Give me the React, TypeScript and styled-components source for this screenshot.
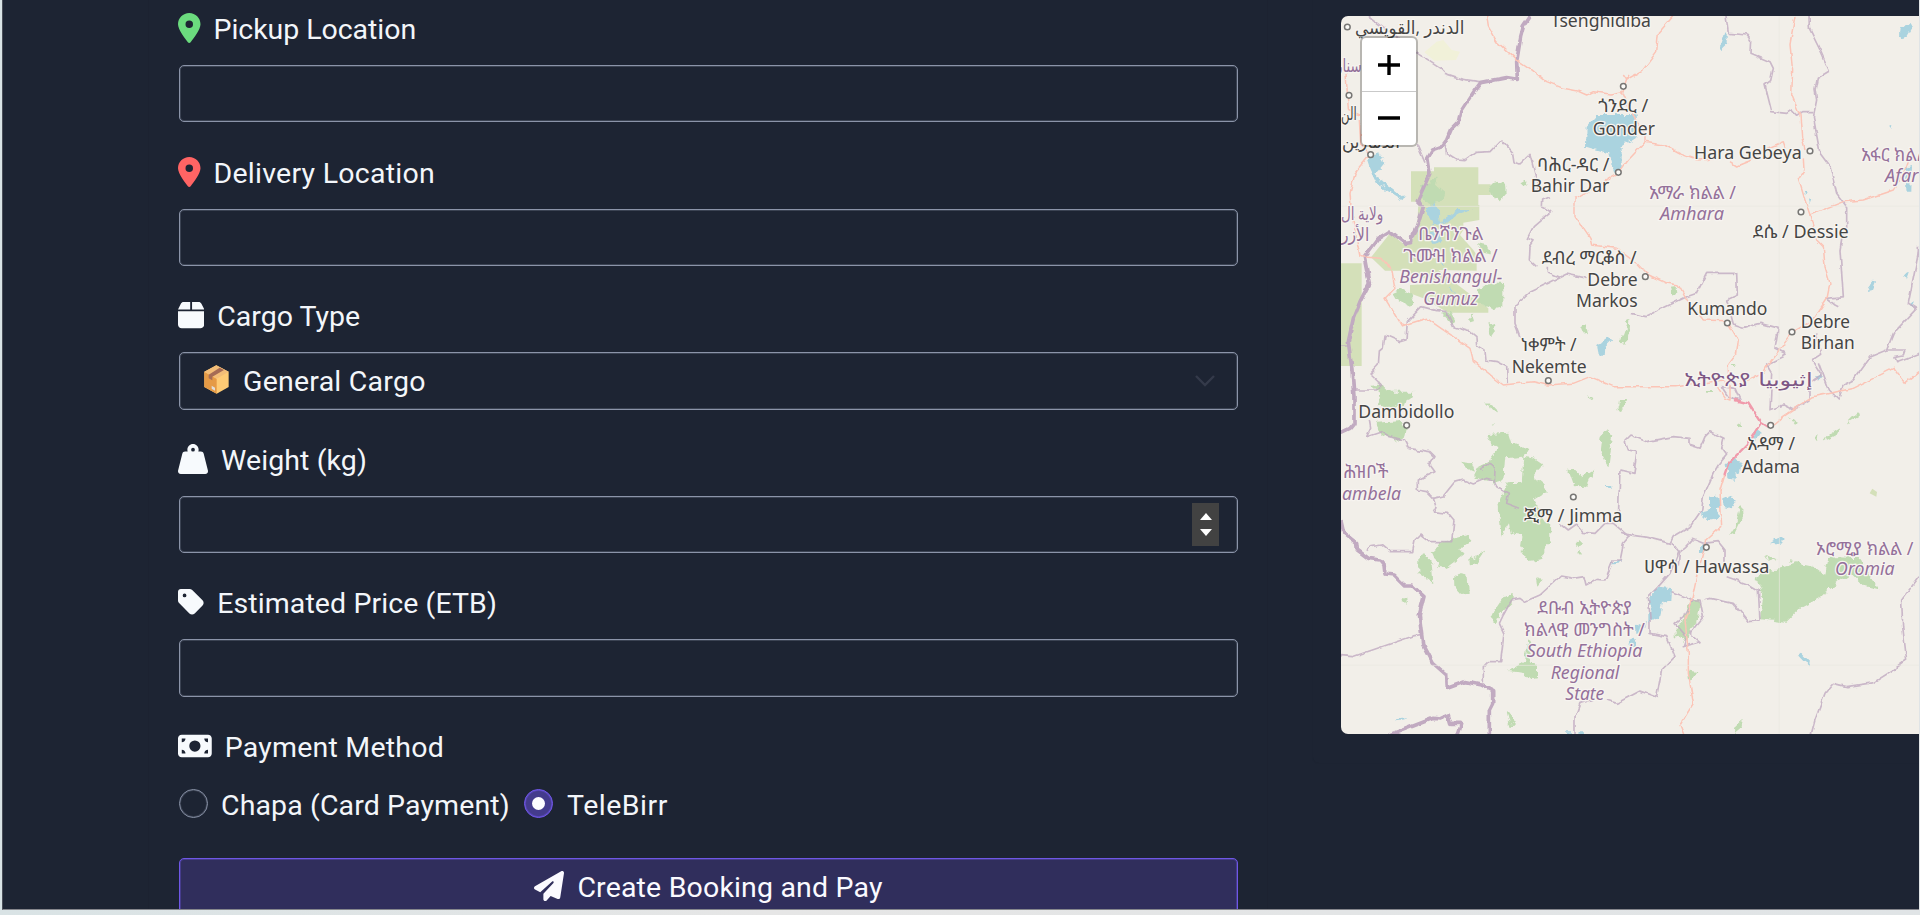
import React from "react";
import styled, { createGlobalStyle } from "styled-components";
import {
  FaBox,
  FaLocationDot,
  FaMoneyBill,
  FaPaperPlane,
  FaTag,
  FaWeightHanging,
} from "react-icons/fa6";

const GlobalStyle = createGlobalStyle`
  * { box-sizing: border-box; }
  html, body { margin: 0; padding: 0; overflow: hidden; background: #e3e6e6; }
`;

const Window = styled.div`
  width: 1920px;
  height: 915px;
  overflow: hidden;
  padding: 0 1px 5px 2px;
  background: linear-gradient(90deg, #d9e3e5 0%, #e6e6e6 40%, #e0e4e6 100%);
`;

const Page = styled.main`
  display: flex;
  height: 910px;
  overflow: hidden;
  border-left: 1px solid #4a4e58;
  border-bottom: 1px solid #85868c;
  background: #1d2433;
  color: #f3f6fa;
  font-family: Roboto, "Liberation Sans", sans-serif;
  font-size: 28.5px;
`;

const FormCard = styled.form`
  width: 1118px;
  margin-left: 146px;
  padding: 6px 29px 0 30px;
  flex: none;
  background: #1d2433;
  box-shadow: 0 0 1px #1a202e;
`;

const Field = styled.div`
  height: 143.6px;
`;

const Label = styled.label<{ $icon: number; $tint?: string }>`
  display: flex;
  align-items: center;
  gap: 13px;
  height: 44px;
  margin: 0 0 15px -1px;

  svg {
    flex: none;
    width: ${(p) => p.$icon}px;
    height: 30px;
    color: ${(p) => p.$tint ?? "#f7fafd"};
  }
`;

const Text = styled.span<{ $track?: number }>`
  padding-top: 3px;
  white-space: nowrap;
  letter-spacing: ${(p) => p.$track ?? 0}px;
`;

const Control = styled.div`
  display: flex;
  align-items: center;
  justify-content: space-between;
  width: 1059px;
  height: 57.4px;
  padding: 0 18px 0 24px;
  border: 1px solid #8b94a9;
  border-radius: 5px;
  box-shadow: inset 0 0 0 1px rgba(139, 148, 169, 0.28);
`;

const SelectValue = styled.span`
  display: flex;
  align-items: center;
  gap: 14px;
  padding-bottom: 2px;
`;

const Chevron = styled.svg`
  margin-right: 4px;
`;

const Spinner = styled.span`
  display: flex;
  flex-direction: column;
  justify-content: space-around;
  align-items: center;
  width: 27px;
  height: 43px;
  padding: 5px 0;
  background: #424242;
`;

const RadioRow = styled.div`
  display: flex;
  align-items: center;
  height: 32px;
  margin-top: 20px;
`;

const Radio = styled.span<{ $checked?: boolean }>`
  display: flex;
  align-items: center;
  justify-content: center;
  flex: none;
  width: 29px;
  height: 29px;
  border-radius: 50%;
  border: 1px solid ${(p) => (p.$checked ? "#7459f0" : "#8b94a9")};
  box-shadow: inset 0 0 0 1px ${(p) => (p.$checked ? "rgba(116, 89, 240, 0.4)" : "rgba(139, 148, 169, 0.28)")};
  background: ${(p) => (p.$checked ? "#443b8c" : "transparent")};

  &::after {
    content: "";
    width: 13px;
    height: 13px;
    border-radius: 50%;
    background: ${(p) => (p.$checked ? "#fdfcff" : "transparent")};
  }
`;

const Option = styled.label<{ $width: number; $gap: number }>`
  display: flex;
  align-items: center;
  gap: ${(p) => p.$gap}px;
  width: ${(p) => p.$width}px;
`;

const Submit = styled.button`
  display: flex;
  align-items: center;
  justify-content: center;
  gap: 13px;
  width: 1059px;
  height: 57px;
  margin-top: 38px;
  padding: 0;
  border: 1px solid #6f57e6;
  border-radius: 5px;
  box-shadow: inset 0 0 0 1px rgba(111, 87, 230, 0.35);
  background: #302e5c;
  color: #fbfaff;
  font: inherit;
`;

const MapColumn = styled.section`
  flex: 1;
  height: 763px;
  margin-left: 46px;
  padding: 16px 0 0 28px;
  border-radius: 0 0 0 6px;
  box-shadow: 0 0 1px #1a202e;
`;

const MapPane = styled.div`
  position: relative;
  width: 578px;
  height: 718px;
  overflow: hidden;
  border-radius: 7px 0 0 7px;
  background: #f2efe9;
`;

const MapSvg = styled.svg`
  display: block;
  font-family: "Noto Sans", "Noto Sans Ethiopic", "DejaVu Sans", sans-serif;
`;

const ZoomControl = styled.div`
  position: absolute;
  left: 19px;
  top: 20px;
  width: 58px;
  height: 111px;
  border: 2px solid rgba(0, 0, 0, 0.24);
  border-radius: 6px;
  background: #fff;
  background-clip: padding-box;
`;

const ZoomButton = styled.div`
  display: flex;
  align-items: center;
  justify-content: center;
  height: 53px;

  & + & {
    border-top: 1px solid #c9c9c9;
  }
`;

function PackageIcon() {
  return (
    <svg width="25" height="29" viewBox="0 0 75 87">
      <path d="M37 1 74 20v46L38 86 1 66V20z" fill="#ffcb75" />
      <path d="M1 20l37 21v45L1 66z" fill="#e59a46" />
      <path d="M37 1l37 19-36 21L1 20z" fill="#f3bd78" />
      <path d="M47 8l13 7-35 20v11l-11-6V29z" fill="#a56b55" />
      <path d="M23 62l10 6v9l-10-6z" fill="#e0dedb" />
    </svg>
  );
}

type LabelKind = "town" | "region" | "country";
type MapText = [string, number, number, number, LabelKind?, boolean?];

/* text, left, right, baseline, kind, italic */
const mapTexts: MapText[] = [
  ["الدندر ,القويسي", 75, 403, 100],
  ["Tsenghidiba", 662, 963, 80],
  ["سنار", 18, 95, 213, "region"],
  ["الن", 33, 80, 357],
  ["الدمازين", 36, 210, 443],
  ["ولاية ال", 33, 160, 657, "region"],
  ["الأزر", 33, 118, 720, "region"],
  ["ጎንደር /", 805, 955, 335],
  ["Gonder", 788, 975, 403],
  ["ባሕር-ዳር /", 622, 838, 511],
  ["Bahir Dar", 602, 838, 574],
  ["Hara Gebeya", 1092, 1415, 475],
  ["አማራ ክልል /", 957, 1218, 595, "region"],
  ["Amhara", 990, 1182, 658, "region", true],
  ["አፋር ክልል", 1594, 1795, 482, "region"],
  ["Afar", 1665, 1765, 545, "region", true],
  ["ደሴ / Dessie", 1268, 1556, 711],
  ["ቤንሻንጉል", 265, 460, 718, "region"],
  ["ጉሙዝ ክልል /", 220, 503, 785, "region"],
  ["Benishangul-", 208, 517, 848, "region", true],
  ["Gumuz", 280, 445, 913, "region", true],
  ["ደብረ ማርቆስ /", 635, 920, 790],
  ["Debre", 772, 923, 856],
  ["Markos", 738, 923, 920],
  ["Kumando", 1072, 1312, 943],
  ["Debre", 1412, 1560, 982],
  ["Birhan", 1412, 1574, 1045],
  ["ነቀምት /", 572, 740, 1050],
  ["Nekemte", 545, 770, 1117],
  ["ኢትዮጵያ", 1063, 1260, 1155, "country"],
  ["إثيوبيا", 1285, 1448, 1155, "country"],
  ["Dambidollo", 85, 373, 1253],
  ["አዳማ /", 1252, 1395, 1348],
  ["Adama", 1235, 1410, 1416],
  ["ሕዝቦች", 40, 175, 1432, "region"],
  ["ambela", 36, 213, 1498, "region", true],
  ["ጂማ / Jimma", 582, 877, 1565],
  ["ሀዋሳ / Hawassa", 942, 1318, 1718],
  ["ኦሮሚያ ክልል /", 1458, 1750, 1662, "region"],
  ["Oromia", 1515, 1694, 1724, "region", true],
  ["ደቡብ ኢትዮጵያ", 622, 905, 1840, "region"],
  ["ክልላዊ መንግስት /", 582, 945, 1905, "region"],
  ["South Ethiopia", 590, 937, 1970, "region", true],
  ["Regional", 662, 868, 2035, "region", true],
  ["State", 706, 823, 2098, "region", true],
];

const labelColors: Record<LabelKind, string> = {
  town: "#454544",
  region: "#94709a",
  country: "#7d5785",
};

const towns: [number, number][] = [
  [52, 81], [57, 286], [122, 464], [880, 259], [865, 517], [1440, 453],
  [1413, 636], [946, 830], [1192, 969], [1386, 996], [655, 1142],
  [230, 1276], [1322, 1276], [730, 1491], [1129, 1642],
];

const paleParks = [
  "M243 514H312V502H445V553H482V585H445V615H448V660L400 668V690L390 705 430 750 440 765V812L325 810L475 925V938H355L280 895L240 880V855L330 850L210 812H165L123 772L180 700L225 735L250 715L262 680L265 605H243z",
  "M33 790H95V1098H33z",
  "M1619 1480l8-14 14 10-2 14z",
];

const forests = [
  "M478 560L490 548 505 545 528 552 530 585 510 598 490 590z",
  "M568 552l14-8 12 12-14 8z M270 560l30-10 10-20 10 0-5 25 25 20-10 30-30 10-20-10z",
  "M190 878L215 868 240 880 250 910 240 920 205 903z",
  "M445 862L480 850 520 852V918L490 925 440 905z M440 730l30 5 10 25-25-5z",
  "M475 975l20-6 2 25 -12 17 -8-14z",
  "M330 935l30-5 20 35-15 10z M408 955l20-8 4 12-14 5z",
  "M754 978l15 0 5 25-12-5z",
  "M870 1025l16-45 4-22 8 0-3 50-12 20z",
  "M125 1155L155 1150 180 1175 250 1175 240 1200 205 1225 185 1222 140 1215 152 1180z",
  "M135 1265L215 1260 230 1290 225 1315 195 1325 155 1305z",
  "M472 1302L535 1298 545 1330 598 1348 580 1370 525 1375 520 1440 490 1448 430 1430 445 1400 475 1385 505 1345 480 1330z",
  "M390 1385l35 5 10 25-20-8z M472 1210l20 5 12 25-20-5z M488 1275l10-5-4 10z",
  "M580 1370L610 1375 640 1395 610 1430 640 1455 650 1475 610 1500 660 1580 662 1630 640 1650 640 1680 600 1685 570 1640 575 1605 545 1600 540 1570 515 1610 505 1510 530 1450 575 1448z",
  "M815 1305L830 1288 850 1310 840 1360 835 1400 810 1350z",
  "M718 1415l15-8 22 22 35-22-22 50-35 2z M780 1200l-5-12 14 10z",
  "M855 1230l32-30-8 25-16 7z",
  "M265 1665L285 1655 305 1690 310 1750 265 1720z",
  "M305 1655L350 1620 410 1605 425 1620 385 1645 410 1660 350 1705 325 1700z",
  "M415 1678l52-30-30 42-20 3z M372 1730l15-12 22 5 4 55-20 4-20-25z",
  "M615 1732l12-4 10 15-18 20z M350 1702l20-3-15 8z",
  "M520 1790l25-12 0 30-40 40-8 22-14-12 15-35z M216 1790l12 5 3 20-12-12z",
  "M540 2010l45-30 10-60 16 10-15 50 25 20 0 35-20 2-20-20z M530 2130l10 5 12 40-10 12z",
  "M735 1630l15-10 10 20-14 5z M738 1655l12-5-2 16z",
  "M1020 860l20-2 2 20-18 6z",
  "M1550 1270l30-30 4 12-32 18z M1490 1310l40-25-10 20-40 20z M1377 1250l28 18-10 6z M1455 1312l14-6-5 18z",
  "M870 1200l18 0-4 20-18 8z M1220 1275l12-8-4 20z M1205 1095l14 0-6 10z M1130 1170h16v8h-16z",
  "M1230 1518l14 14-30 65-16 8 18-28z",
  "M1270 1740L1310 1705 1335 1710 1400 1690 1450 1700 1485 1725 1495 1670 1590 1675 1600 1700 1645 1765 1640 1770 1600 1760 1560 1720 1495 1765 1485 1785 1410 1825 1370 1865 1290 1855 1300 1790 1285 1745z",
  "M1306 1668l34 6-22 14z M1370 1680l20 2-8 6z",
  "M1090 1800l22 2-10 60-15 20-20 45-30-20 0-25 28-20 5-45z",
  "M1075 2012l24 4-10 22-12-2z M1215 2180l24-20-5 25-18 15z",
];

const lakes = [
  "M770 378L800 345 920 345 922 410 875 440 875 505 850 515 835 460 768 440z",
  "M110 475l35-15 18 30-25 30 12 20 70 55-6 4-72-46-20-42z",
  "M285 630l30-25 10 25 5 35 50-35 50 0-45 12-35 28-40 6-10-20z M300 700l28-5 12 30-30 10z",
  "M325 780l18 20-14-8z M350 860l25 18-10 0z",
  "M802 1035l28-20 18 4-22 22-2 26-18 0z",
  "M1170 145l15-48 8 5 0 32-20 20z",
  "M1715 90l25-25 3 12-22 38-8-8z M1728 500l15-5-2 80-12 0z M1675 382l9-5-2 12z",
  "M1610 865l15-20 10 2-10 26-12 3z M1720 828l12-12 4 4-10 28z M1740 912l18-8-8 18z",
  "M1270 1295l15-5 10 8-18 24-8-6z M1190 1390l18-10 28 5-6 30-16 10 0 18-22-5z",
  "M1140 1490l25-5 5 38-20 8-10-12z M1180 1495l25-10 12 20-12 20-25-8z M1108 1535l50-12 10 30-30 6-30-14z",
  "M1110 1635l20-8 8 14-14 16-14 0z M1320 1630l20-12 24-4-14 16z",
  "M960 1780l30-20 36 4-2 40-24 4-10 40-32 20 0-60z",
  "M915 1880l36-20-5 30-30 12z M892 1925l22-10 6 20-20 8z",
  "M1400 1968l12-8 28 28-5 8-22-14z M195 2158l40-3-10 6-20 2z M708 2200h30v6h-30z M745 2197h20v8h-20z",
  "M838 1685l34-4 0 6-34 4z M825 1455l20 0-10 12z M1458 1123l16-5-4 16-8 2z",
  "M1424 570l10 4-6 12z M1440 595l7 4-5 14z",
];

const thickBorders = [
  "M602 48L580 80 572 110 560 185 562 238 530 233 452 248 435 270 392 335 385 365 365 385 350 420 335 440 308 450 293 475 300 520 262 603 280 620 262 680 245 712 245 728 228 730 180 693 145 715 103 772 118 850 90 905 70 955 55 1025 65 1100 72 1190 72 1270 60 1285 33 1298",
  "M33 1560L42 1600 80 1630 82 1650 115 1675 150 1680 162 1695 165 1722 190 1725 220 1755 245 1755 282 1790 268 1845 278 1930 310 1990 350 2025 352 2065 405 2045 455 2055 488 2072 488 2110 478 2130 478 2210",
  "M180 2205L310 2155 330 2157 355 2145 362 2170 395 2170 382 2210",
];

const borders = [
  "M115 48L225 130 262 160 330 205 345 220 400 238 448 245",
  "M262 435L285 488 M345 435L350 462 378 480 405 482 440 457 480 455 513 420 548 460 552 485 570 492 600 463 610 500 620 540 625 570",
  "M660 590L638 600 637 620 662 635 610 680 592 715 612 722 600 740 598 780 622 802",
  "M33 1038H60 M75 1170H140L155 1155 120 1122 145 1095 148 1050 160 1040 165 1005 210 1025 228 1020 232 965 275 920 320 932 350 935 370 980 420 995 438 1010 440 1035 465 1050 468 1080 500 1085 530 1100 532 1150",
  "M570 1010L555 970 555 915 600 875 655 850 690 832 652 815 652 800 M690 832L710 822 770 835",
  "M118 1260L122 1285 110 1310 155 1295 180 1310 222 1320 235 1345 300 1355 315 1370 300 1395 315 1415 262 1440 262 1470 290 1475 310 1495 340 1488 372 1448 400 1440 430 1452 470 1435 490 1440 500 1460 535 1480 530 1510 570 1525",
  "M455 1410a20 20 0 0 1 40 0l-2 38",
  "M310 1495L318 1520 310 1535 355 1540 372 1560 365 1625 300 1625 270 1602 252 1620 245 1655 180 1655 155 1635 125 1640 110 1652",
  "M33 1967L68 1970 250 1908 275 1903",
  "M460 2050V2000L475 1985 512 1985 522 1900 508 1870 520 1845 545 1800 570 1795 583 1805 630 1785 692 1728 730 1735 762 1730 768 1755 800 1738 825 1740 850 1680 870 1680 880 1630 897 1610 850 1570 825 1570 795 1600 760 1597 740 1572 715 1590 690 1570",
  "M735 2205V2150L750 2110 790 2098 M830 2100L860 2110 930 2073 980 2092 995 2010 1035 1970 1010 1910 960 1900 960 1850 955 1790 985 1760 1020 1720 1045 1660 1070 1640 1090 1618 1120 1630 1165 1625 1185 1650 1185 1690",
  "M870 1600L950 1612 1020 1630 1030 1610 1080 1580 1115 1530 1120 1490 1150 1420 1165 1395 1190 1365 1175 1345 1182 1315 1140 1295 1125 1310 1110 1345 1080 1335 1080 1315 1030 1310 950 1325 900 1305 885 1320 895 1350 920 1355 912 1420 870 1410 865 1550",
  "M1025 1630L1048 1660 1045 1700",
  "M905 940L945 950 1070 890 1100 880 1130 820 1220 820 1222 885 1190 900 1210 975 1240 985 1290 970 1345 985 1335 1045 1365 1060 1360 1070 1310 1095 1325 1120 1320 1230 1360 1215 1390 1230 1440 1200 1440 1150 1470 1130 1470 1120 1445 1080 1475 1060 1460 1000 M1525 920L1515 915 1490 895 1540 890 1530 750 1535 720 1550 685 1550 620 1520 580 1500 500 1470 460 1450 350 1460 300 1455 270 1462 235 1498 213 1470 150 1438 85 1437 48",
  "M1188 48L1195 100 1250 105 1262 120 1260 160 1320 185 1330 205 1322 242 1305 255 1325 335 1370 340 1385 330 1400 346 1415 335 1450 335",
  "M1767 750L1755 810 1735 910 1760 925 1690 1000 1670 1050 1620 1070 1570 1140 1540 1155 1525 1200 1495 1170 1465 1090 M1670 1050L1725 1050 1720 1065 1695 1070 1700 1085 1767 1060",
  "M1175 1160L1195 1190 1230 1200 1215 1165z M1765 740v30",
  "M1025 1775L1090 1800 M1120 1800L1140 1795 1210 1810 1255 1865 1290 1862 1285 1770 1260 1755 1190 1730 M1090 1800L1110 1800 1120 1850 1080 1900 1110 1925 1060 1940 1070 1910 1035 1870 1060 1850z",
  "M1443 2205L1455 2160 1485 2080 1510 2050 1550 2060 1630 2048 1690 2010 1730 1980 1718 1880 1715 1800 1767 1730",
];

const roads = [
  "M470 48L475 80 500 125 555 175 600 205 650 245 700 265 740 272 770 285 790 275 840 282 878 275 890 240 900 225",
  "M880 225L890 240 935 215 980 155 985 100 1030 48",
  "M875 270L900 330 945 400 945 427 1000 435 1050 462 1100 480 1150 478 M1200 485L1220 498 1265 480 1300 450 1360 425 1365 440",
  "M945 427L895 480 865 520 735 595 735 650 780 715 785 735 860 745 920 790 950 822 1010 850 1045 855 1070 900 1120 960 1190 962 1225 1020 1220 1060 1195 1095 1195 1130",
  "M1395 48L1380 130 1388 210 1385 285 1410 345 1415 410 1425 450 M1420 475L1422 510 1405 535 1425 600 1440 645 1540 605 1600 600 1690 570 1730 500 1735 485",
  "M1440 645L1460 720 1480 740 1485 800 1500 850 1490 900 1450 960 1390 995 1340 1060 1310 1100 1300 1120 1220 1155",
  "M48 220L55 330 90 345M88 360L92 435 120 465 75 520 60 580 65 640 90 770 155 775 185 810 195 865 165 895 215 978 290 955 355 1000 420 1045 430 1085 520 1155 610 1145 650 1155 730 1150 780 1130 850 1160 1040 1160 1180 1140",
  "M1155 1150L1185 1195 1200 1200 1200 1160 1180 1145 M1330 1275L1360 1250 1450 1190 1570 1165 1690 1105 1725 1150 1767 1115",
  "M1185 1420L1170 1470 1175 1580 1130 1620 1100 1730 1085 1800 1065 1860 1075 1960 1075 2020 1090 2110 1050 2175 1062 2205",
];

function EthiopiaMap() {
  return (
    <MapSvg width="578" height="719" viewBox="33 48 1734 2157">
      <defs>
        <filter id="coast" x="-5%" y="-5%" width="110%" height="110%">
          <feTurbulence type="fractalNoise" baseFrequency="0.04" numOctaves="3" seed="4" />
          <feDisplacementMap in="SourceGraphic" scale="24" xChannelSelector="R" yChannelSelector="G" />
        </filter>
        <filter id="wiggle" x="-5%" y="-5%" width="110%" height="110%">
          <feTurbulence type="fractalNoise" baseFrequency="0.035" numOctaves="2" seed="9" />
          <feDisplacementMap in="SourceGraphic" scale="14" xChannelSelector="R" yChannelSelector="G" />
        </filter>
      </defs>
      <g fill="#d4e0b9">{paleParks.map((d) => <path key={d} d={d} />)}</g>
      <path d="M320 125l20-5 25 30 25 5-12 25-65 2-30-25z" fill="#f1f1d9" />
      <g filter="url(#coast)">
        <g fill="#c0dbb2">{forests.map((d) => <path key={d} d={d} />)}</g>
        <g fill="#aad3df">{lakes.map((d) => <path key={d} d={d} />)}</g>
      </g>
      <g filter="url(#wiggle)" fill="none" strokeLinejoin="round">
        <g stroke="#c1aac1" strokeWidth="5" opacity=".8">{borders.map((d) => <path key={d} d={d} />)}</g>
        <g stroke="#c1aac1" strokeWidth="11">{thickBorders.map((d) => <path key={d} d={d} />)}</g>
        <g stroke="#fcc4b6" strokeWidth="4.5">{roads.map((d) => <path key={d} d={d} />)}</g>
        <path d="M1215 1200L1255 1210 1290 1265 1315 1280M1295 1265L1250 1335 1195 1390 1183 1425" stroke="#f09aab" strokeWidth="7" />
      </g>
      <path d="M33 619H1767M1348 48V2205M33 1996H1767" stroke="#ebe8e3" strokeWidth="2" />
      <g fill="#fbfaf7" stroke="#777674" strokeWidth="4.5">
        {towns.map(([x, y]) => <circle key={`${x}-${y}`} cx={x} cy={y} r="8.5" />)}
      </g>
      <g fontSize="54" stroke="#f7f4f0" strokeWidth="8" strokeLinejoin="round" paintOrder="stroke">
        {mapTexts.map(([text, left, right, y, kind = "town", italic]) => (
          <text
            key={text + y}
            x={(left + right) / 2}
            y={y + 2}
            textAnchor="middle"
            textLength={right - left}
            lengthAdjust="spacingAndGlyphs"
            fill={labelColors[kind]}
            fontStyle={italic ? "italic" : "normal"}
          >
            {text}
          </text>
        ))}
      </g>
    </MapSvg>
  );
}

export default function App() {
  return (
    <>
      <GlobalStyle />
      <Window>
        <Page>
          <FormCard>
            <Field>
              <Label $icon={22.5} $tint="#6bdb7e"><FaLocationDot /><Text $track={-0.05}>Pickup Location</Text></Label>
              <Control />
            </Field>
            <Field>
              <Label $icon={22.5} $tint="#ff6464"><FaLocationDot /><Text $track={0.25}>Delivery Location</Text></Label>
              <Control />
            </Field>
            <Field>
              <Label $icon={26.25}><FaBox /><Text>Cargo Type</Text></Label>
              <Control>
                <SelectValue><PackageIcon /><Text $track={0.23}>General Cargo</Text></SelectValue>
                <Chevron width="20" height="12" viewBox="0 0 20 12" fill="none" stroke="#343a4a" strokeWidth="2.4">
                  <path d="M1 1l9 9 9-9" />
                </Chevron>
              </Control>
            </Field>
            <Field>
              <Label $icon={30}><FaWeightHanging /><Text $track={0.1}>Weight (kg)</Text></Label>
              <Control>
                <span />
                <Spinner>
                  <svg width="12" height="7" viewBox="0 0 12 7"><path d="M0 7l6-7 6 7z" fill="#fff" /></svg>
                  <svg width="12" height="7" viewBox="0 0 12 7"><path d="M0 0l6 7 6-7z" fill="#fff" /></svg>
                </Spinner>
              </Control>
            </Field>
            <Field>
              <Label $icon={26.25}><FaTag /><Text $track={0.09}>Estimated Price (ETB)</Text></Label>
              <Control />
            </Field>
            <Label $icon={33.75}><FaMoneyBill /><Text $track={0.22}>Payment Method</Text></Label>
            <RadioRow>
              <Option $width={344.5} $gap={13}><Radio /><Text $track={0.12}>Chapa (Card Payment)</Text></Option>
              <Option $width={160} $gap={14.5}><Radio $checked /><Text $track={0.5}>TeleBirr</Text></Option>
            </RadioRow>
            <Submit type="button"><FaPaperPlane size={30} /><Text $track={0.17}>Create Booking and Pay</Text></Submit>
          </FormCard>
          <MapColumn>
            <MapPane>
              <EthiopiaMap />
              <ZoomControl>
                <ZoomButton>
                  <svg width="22" height="20" viewBox="0 0 22 20"><path d="M0 10h22M11 0v20" stroke="#000" strokeWidth="3.4" /></svg>
                </ZoomButton>
                <ZoomButton>
                  <svg width="22" height="4" viewBox="0 0 22 4"><path d="M0 2h22" stroke="#000" strokeWidth="3.4" /></svg>
                </ZoomButton>
              </ZoomControl>
            </MapPane>
          </MapColumn>
        </Page>
      </Window>
    </>
  );
}
